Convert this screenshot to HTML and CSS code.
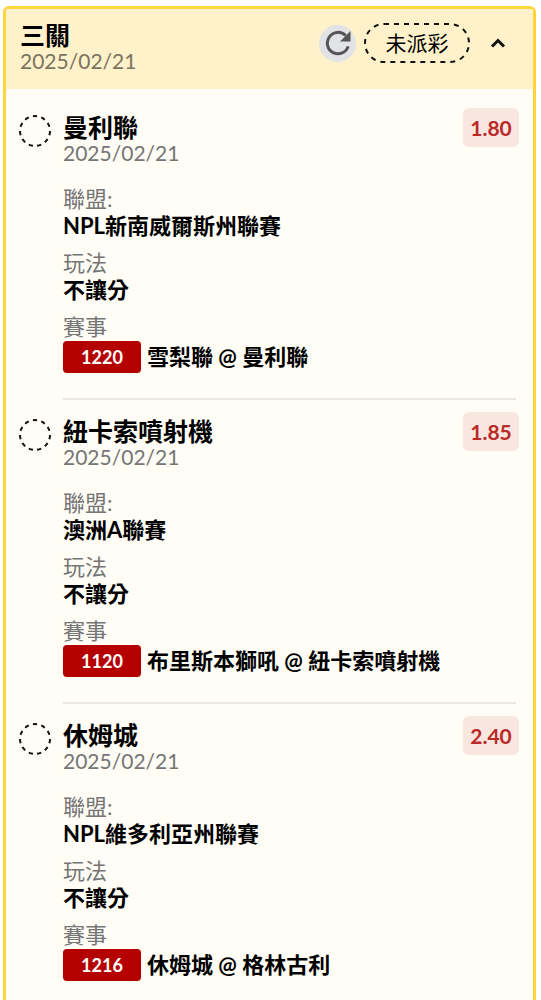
FILE: index.html
```html
<!DOCTYPE html>
<html lang="zh-Hant">
<head>
    <meta charset="utf-8">
    <meta name="viewport" content="width=device-width, initial-scale=1">
    <title>三關</title>
    <link rel="stylesheet" href="styles.css">
</head>
<body>
    <main class="card">
        <header class="card-header">
            <div class="heading">
                <h1 class="title">三關</h1>
                <p class="date">2025/02/21</p>
            </div>
            <div class="actions">
                <button type="button" class="refresh" aria-label="重新整理">
                    <svg width="26" height="26" viewBox="0 0 26 26" fill="none">
                        <path d="M23.2 16.400A10.700 10.700 0 1 1 20.6 5.500" stroke="#555" stroke-width="3"/>
                        <path d="M25.500 1v10.500H15z" fill="#555"/>
                    </svg>
                </button>
                <span class="status">
                    <svg class="outline"><rect class="dashes" x="1" y="1" rx="19"/></svg>
                    未派彩
                </span>
                <button type="button" class="toggle" aria-label="收合">
                    <svg width="16" height="10" viewBox="0 0 16 10" fill="none">
                        <path d="M2 8.500L8 2.500L14 8.500" stroke="#111" stroke-width="3"/>
                    </svg>
                </button>
            </div>
        </header>

        <div class="bets">
            <section class="bet">
                <svg class="pending" viewBox="0 0 32 32"><circle cx="16" cy="16" r="15" pathLength="110"/></svg>
                <div class="bet-body">
                    <div class="bet-top">
                        <div>
                            <h2 class="title">曼利聯</h2>
                            <p class="date">2025/02/21</p>
                        </div>
                        <span class="odds">1.80</span>
                    </div>
                    <dl class="details">
                        <div><dt>聯盟:</dt><dd>NPL新南威爾斯州聯賽</dd></div>
                        <div><dt>玩法</dt><dd>不讓分</dd></div>
                        <div><dt>賽事</dt><dd class="match"><span class="code">1220</span>雪梨聯 @ 曼利聯</dd></div>
                    </dl>
                </div>
            </section>

            <section class="bet">
                <svg class="pending" viewBox="0 0 32 32"><circle cx="16" cy="16" r="15" pathLength="110"/></svg>
                <div class="bet-body">
                    <div class="bet-top">
                        <div>
                            <h2 class="title">紐卡索噴射機</h2>
                            <p class="date">2025/02/21</p>
                        </div>
                        <span class="odds">1.85</span>
                    </div>
                    <dl class="details">
                        <div><dt>聯盟:</dt><dd>澳洲A聯賽</dd></div>
                        <div><dt>玩法</dt><dd>不讓分</dd></div>
                        <div><dt>賽事</dt><dd class="match"><span class="code">1120</span>布里斯本獅吼 @ 紐卡索噴射機</dd></div>
                    </dl>
                </div>
            </section>

            <section class="bet">
                <svg class="pending" viewBox="0 0 32 32"><circle cx="16" cy="16" r="15" pathLength="110"/></svg>
                <div class="bet-body">
                    <div class="bet-top">
                        <div>
                            <h2 class="title">休姆城</h2>
                            <p class="date">2025/02/21</p>
                        </div>
                        <span class="odds">2.40</span>
                    </div>
                    <dl class="details">
                        <div><dt>聯盟:</dt><dd>NPL維多利亞州聯賽</dd></div>
                        <div><dt>玩法</dt><dd>不讓分</dd></div>
                        <div><dt>賽事</dt><dd class="match"><span class="code">1216</span>休姆城 @ 格林古利</dd></div>
                    </dl>
                </div>
            </section>
        </div>
    </main>
</body>
</html>
```
FILE: styles.css
```css
* {
    box-sizing: border-box;
}
body {
    margin: 0;
    padding: 6px 5px 0 3px;
    background-color: #fff;
    color: #000;
    font-family: Lato, "Noto Sans CJK TC", sans-serif;
    font-size: 22px;
    line-height: 27px;
}
h1, h2, p, dl, dd {
    margin: 0;
}
button {
    padding: 0;
    border: none;
    background: none;
    cursor: pointer;
}
.card {
    min-height: calc(100vh - 6px);
    border: 3px solid #fdd63c;
    border-bottom: none;
    border-radius: 6px 6px 0 0;
    background-color: #fffdf5;
}
.card-header {
    display: flex;
    justify-content: space-between;
    padding: 13px 27px 15px 14px;
    background-color: #fff1ca;
}
.title {
    font-size: 25px;
    font-weight: 600;
    line-height: 26px;
}
.date {
    color: #757575;
    font-size: 21px;
    line-height: 26px;
}
.card-header .date {
    color: #7b735f;
}
.actions {
    display: flex;
    align-items: center;
    height: 42px;
}
.refresh {
    display: flex;
    align-items: center;
    justify-content: center;
    width: 37px;
    height: 37px;
    border-radius: 50%;
    background-color: #e2e3e6;
}
.status {
    position: relative;
    width: 106px;
    margin-left: 8px;
    font-size: 21px;
    line-height: 40px;
    text-align: center;
}
.outline {
    position: absolute;
    inset: 0;
    width: 100%;
    height: 100%;
}
.dashes {
    width: calc(100% - 2px);
    height: calc(100% - 2px);
    fill: none;
    stroke: #111;
    stroke-width: 2;
    stroke-dasharray: 5 5;
}
.toggle {
    display: flex;
    margin-left: 20px;
}
.bets {
    padding: 7px 17px 0 13px;
}
.bet {
    display: flex;
    gap: 12px;
    padding-top: 12px;
}
.pending {
    flex: none;
    width: 32px;
    height: 32px;
    margin-top: 7px;
    fill: none;
    stroke: #111;
    stroke-width: 2;
    stroke-dasharray: 5 5;
}
.bet-body {
    flex: 1;
    min-width: 0;
}
.bet:not(:last-child) .bet-body {
    padding-bottom: 25px;
    border-bottom: 2px solid #e9e7e1;
}
.bet-top {
    display: flex;
    justify-content: space-between;
    align-items: flex-start;
    margin-right: -3px;
}
.bet-top .title {
    margin-top: 6px;
}
.odds {
    width: 56px;
    border-radius: 6px;
    background-color: #f8e6e0;
    color: #bb2a26;
    font-size: 21px;
    font-weight: 700;
    line-height: 39px;
    text-align: center;
}
.details {
    display: grid;
    gap: 10px;
    margin-top: 19px;
}
dt {
    color: #757575;
}
dd {
    font-weight: 700;
}
.match {
    display: flex;
    align-items: center;
    gap: 6px;
    padding-top: 1px;
    line-height: 32px;
}
.code {
    width: 78px;
    border-radius: 4px;
    background-color: #b50000;
    color: #fff;
    font-size: 18px;
    text-align: center;
}
```
